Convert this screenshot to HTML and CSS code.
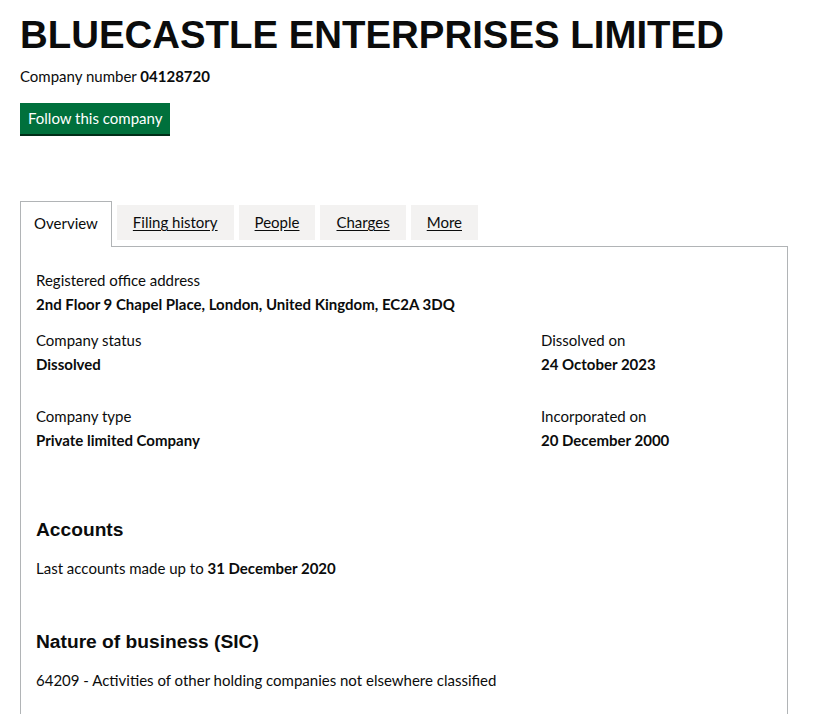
FILE: index.html
```html
<!DOCTYPE html>
<html lang="en">
<head>
    <meta charset="UTF-8">
    <meta name="viewport" content="width=device-width, initial-scale=1.0">
    <title>BLUECASTLE ENTERPRISES LIMITED overview</title>
    <link rel="stylesheet" href="styles.css">
</head>
<body>
    <main class="page">
        <h1 class="company-name">BLUECASTLE ENTERPRISES LIMITED</h1>
        <p class="company-number">Company number <strong>04128720</strong></p>
        <a class="button" href="#">Follow this company</a>

        <ul class="tabs">
            <li class="tab tab-selected"><a href="#">Overview</a></li>
            <li class="tab"><a href="#">Filing history</a></li>
            <li class="tab"><a href="#">People</a></li>
            <li class="tab"><a href="#">Charges</a></li>
            <li class="tab"><a href="#">More</a></li>
        </ul>

        <div class="panel">
            <dl class="field">
                <dt>Registered office address</dt>
                <dd>2nd Floor 9 Chapel Place, London, United Kingdom, EC2A 3DQ</dd>
            </dl>

            <div class="row row-status">
                <dl class="field">
                    <dt>Company status</dt>
                    <dd>Dissolved</dd>
                </dl>
                <dl class="field">
                    <dt>Dissolved on</dt>
                    <dd>24 October 2023</dd>
                </dl>
            </div>

            <div class="row row-type">
                <dl class="field">
                    <dt>Company type</dt>
                    <dd>Private limited Company</dd>
                </dl>
                <dl class="field">
                    <dt>Incorporated on</dt>
                    <dd>20 December 2000</dd>
                </dl>
            </div>

            <h2 class="heading heading-accounts">Accounts</h2>
            <p class="body-text">Last accounts made up to <strong>31 December 2020</strong></p>

            <h2 class="heading heading-sic">Nature of business (SIC)</h2>
            <p class="body-text">64209 - Activities of other holding companies not elsewhere classified</p>
        </div>
    </main>
</body>
</html>
```

FILE: styles.css
```css
body {
    margin: 0;
    padding: 0;
    font-family: Lato, "Noto Sans", Arial, sans-serif;
    font-size: 15px;
    line-height: 24px;
    color: #0b0c0c;
    background-color: #fff;
}

.page {
    width: 768px;
    margin-left: 20px;
}

.company-name {
    font-family: "Liberation Sans", Arial, sans-serif;
    font-size: 38.4px;
    line-height: 42px;
    font-weight: 700;
    margin: 14px 0 0;
}

.company-number {
    margin: 10px 0 0;
    line-height: 20px;
}

strong {
    font-weight: 700;
}

.button {
    display: inline-block;
    margin-top: 17px;
    padding: 6px 8px;
    line-height: 19px;
    background-color: #00703c;
    color: #fff;
    text-decoration: none;
    box-shadow: 0 2px 0 #002d18;
}

.tabs {
    display: flex;
    align-items: flex-start;
    list-style: none;
    margin: 71px 0 0;
    padding: 0;
}

.tab {
    margin-right: 5px;
    padding: 8px 16px;
    line-height: 19px;
    background-color: #f3f2f1;
}

.tab a {
    color: #0b0c0c;
    text-decoration: underline;
    text-underline-offset: 2px;
}

.tab-selected {
    position: relative;
    margin-top: -4px;
    margin-bottom: -1px;
    padding: 12px 13px 14px;
    border: 1px solid #b1b4b6;
    border-bottom: 0;
    background-color: #fff;
}

.tab-selected a {
    text-decoration: none;
}

.panel {
    border: 1px solid #b1b4b6;
    padding: 21px 15px 40px;
}

.field {
    margin: 0;
}

.field dt,
.field dd {
    margin: 0;
    line-height: 24px;
}

.field dd {
    font-weight: 700;
}

.row {
    display: grid;
    grid-template-columns: 505px 1fr;
}

.row-status {
    margin-top: 12px;
}

.row-type {
    margin-top: 28px;
}

.heading {
    font-family: "Liberation Sans", Arial, sans-serif;
    font-size: 19.2px;
    line-height: 24px;
    font-weight: 700;
    margin: 0;
}

.heading-accounts {
    margin-top: 66px;
}

.heading-sic {
    margin-top: 50px;
}

.body-text {
    margin: 14px 0 0;
}
```
